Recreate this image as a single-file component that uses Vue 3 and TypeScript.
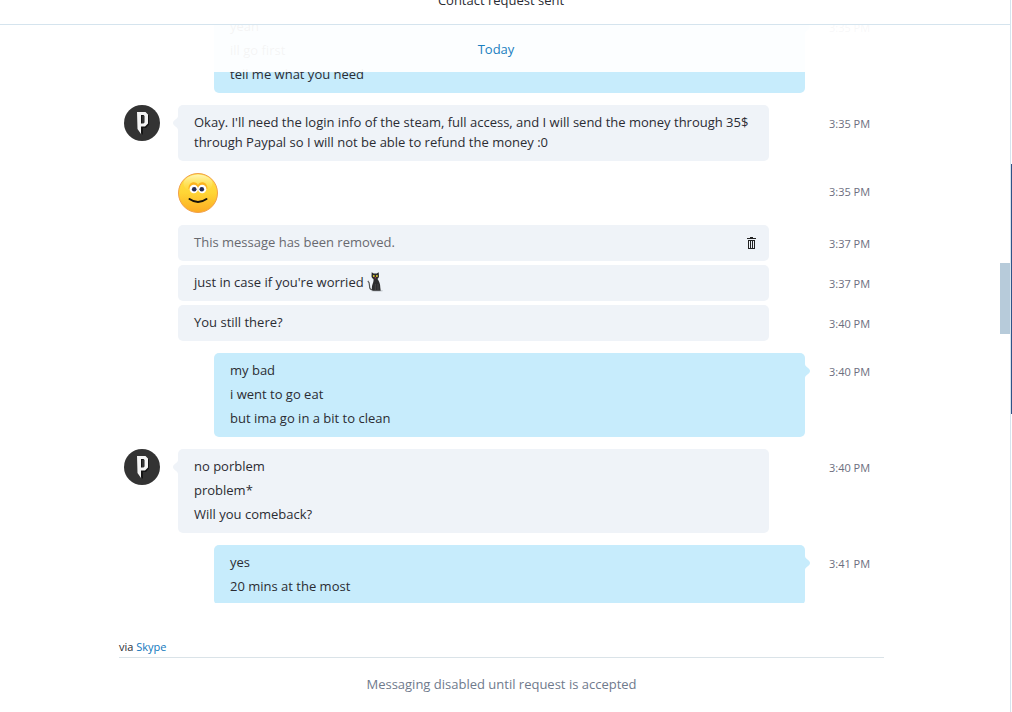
<script setup lang="ts">
type Kind = 'text' | 'removed' | 'smile' | 'cat'

interface Message {
  kind: Kind
  lines: string[]
  time: string
  mine?: boolean
  first?: boolean
}

const messages: Message[] = [
  { kind: 'text', lines: ['yeah', 'ill go first', 'tell me what you need'], time: '3:35 PM', mine: true, first: true },
  {
    kind: 'text',
    lines: [
      "Okay. I'll need the login info of the steam, full access, and I will send the money through 35$ through Paypal so I will not be able to refund the money :0",
    ],
    time: '3:35 PM',
    first: true,
  },
  { kind: 'smile', lines: [], time: '3:35 PM' },
  { kind: 'removed', lines: ['This message has been removed.'], time: '3:37 PM' },
  { kind: 'cat', lines: ["just in case if you're worried"], time: '3:37 PM' },
  { kind: 'text', lines: ['You still there?'], time: '3:40 PM' },
  { kind: 'text', lines: ['my bad', 'i went to go eat', 'but ima go in a bit to clean'], time: '3:40 PM', mine: true, first: true },
  { kind: 'text', lines: ['no porblem', 'problem*', 'Will you comeback?'], time: '3:40 PM', first: true },
  { kind: 'text', lines: ['yes', '20 mins at the most'], time: '3:41 PM', mine: true, first: true },
]
</script>

<template>
  <div class="app">
    <header class="top">Contact request sent</header>

    <main class="scroller">
      <h2 class="day">Today</h2>
      <ol class="list">
        <li
          v-for="(m, i) in messages"
          :key="i"
          class="row"
          :class="{ mine: m.mine, first: m.first, spaced: m.kind === 'smile' || m.kind === 'removed' }"
        >
          <div class="avatar">
            <svg v-if="m.first && !m.mine" viewBox="0 0 36 36" role="img" aria-label="Contact avatar">
              <circle cx="18" cy="18" r="18" fill="#333" />
              <path
                d="M13 7h8.500l2.500 2.500v9L21 22h-3v7l-4.500-5zM17 10v8.500h2.500V10z"
                fill="#151515"
                fill-rule="evenodd"
                transform="translate(1 1)"
              />
              <path d="M13 7h8.500l2.500 2.500v9L21 21.500h-4V29l-3.500-5zM17 10v8.500h2.500l1-1v-6.500l-1-1z" fill="#f4f4f4" fill-rule="evenodd" />
            </svg>
          </div>

          <div v-if="m.kind === 'smile'" class="emote">
            <svg viewBox="0 0 40 40" role="img" aria-label="Smile">
              <defs>
                <linearGradient id="face" x1="0" y1="0" x2="0" y2="1">
                  <stop offset="0" stop-color="#ffe04a" />
                  <stop offset=".5" stop-color="#ffd535" />
                  <stop offset="1" stop-color="#fcab22" />
                </linearGradient>
                <linearGradient id="shine" x1="0" y1="0" x2="0" y2="1">
                  <stop offset="0" stop-color="#fff6b5" />
                  <stop offset="1" stop-color="#ffe04a" stop-opacity="0" />
                </linearGradient>
              </defs>
              <circle cx="20" cy="20" r="19.500" fill="url(#face)" stroke="#f2a04a" />
              <ellipse cx="20" cy="10.500" rx="14.500" ry="9" fill="url(#shine)" />
              <path d="M10.500 16c0-8 8-8 9.500-4 1.500-4 9.500-4 9.500 4" fill="#fdb41f" />
              <circle cx="15.800" cy="16" r="4.200" fill="#fff" />
              <circle cx="24.200" cy="16" r="4.200" fill="#fff" />
              <circle cx="16.200" cy="16.200" r="2.300" fill="#262c55" />
              <circle cx="23.800" cy="16.200" r="2.300" fill="#262c55" />
              <path d="M11.500 26q8.500 6 17 0" fill="none" stroke="#17120a" stroke-width="2" stroke-linecap="round" />
            </svg>
          </div>

          <div v-else class="bubble" :class="{ removed: m.kind === 'removed' }">
            <svg v-if="m.first" class="tail" viewBox="0 0 5 14" aria-hidden="true">
              <path d="M5 0C5 3 0 4 0 7s5 4 5 7z" fill="currentColor" />
            </svg>
            <p v-for="line in m.lines" :key="line">
              {{ line }}
              <svg v-if="m.kind === 'cat'" class="cat" viewBox="0 0 20 20" role="img" aria-label="Cat">
                <ellipse cx="10" cy="18.800" rx="6" ry="1" fill="#cbd0d6" />
                <path d="M6 17.500C3 18 2.500 16 2.500 13.500S1.500 9.500.800 9" fill="none" stroke="#555" stroke-width="1.200" />
                <path
                  d="M4.700.300l2 1.300h3l2-1.300.3 4c0 1-.7 2-1.500 2.600 1.700 2 2.800 5 2.800 8.500l.4 3.300H5.500c-1-2-.7-5 .2-7 .7-1.600 1-3 .8-4.600C5.300 6.300 4.500 5.500 4.500 4.300z"
                  fill="#2c2c2e"
                />
                <circle cx="6.800" cy="4" r=".9" fill="#f0d72e" />
                <circle cx="9.900" cy="4" r=".9" fill="#f0d72e" />
                <path d="M7.700 5.800h1.300" stroke="#e46" stroke-width=".8" />
                <path d="M8.300 12v6.500M11 12v6.500" stroke="#555" stroke-width=".6" />
              </svg>
            </p>
            <svg v-if="m.kind === 'removed'" class="trash" viewBox="0 0 9 13" aria-hidden="true">
              <path
                d="M3 0h3v1h3v1H0V1h3zM1 3h7v9H1zm1 1v7h1V4zm2 0v7h1V4zm2 0v7h1V4z"
                fill="#222"
                fill-rule="evenodd"
              />
            </svg>
          </div>

          <time class="time">{{ m.time }}</time>
        </li>
      </ol>
    </main>

    <footer class="foot">
      <div class="via">via <a href="#skype">Skype</a></div>
      <p class="disabled">Messaging disabled until request is accepted</p>
    </footer>

    <div class="thumb"></div>
    <div class="edge"></div>
  </div>
</template>

<style>
body {
  margin: 0;
  background: #fff;
}
</style>

<style scoped>
.app {
  position: relative;
  box-sizing: border-box;
  display: flex;
  flex-direction: column;
  height: 100vh;
  padding-right: 1px;
  overflow: hidden;
  background: linear-gradient(#d5e4ee, #d5e4ee) calc(100% - 1px) 0 / 1px 100% no-repeat #fff;
  color: #2b2c33;
  font: 13px/20px "Open Sans", "Noto Sans", sans-serif;
}

.top {
  box-sizing: border-box;
  flex: none;
  height: 25px;
  padding-right: 9px;
  border-bottom: 1px solid #d5e4ee;
  line-height: 0;
  text-align: center;
}

.scroller {
  position: relative;
  flex: 1;
  min-height: 0;
  margin-right: 1px;
  padding-right: 7px;
  overflow: hidden;
}

.day {
  position: absolute;
  z-index: 1;
  top: 0;
  right: 0;
  left: 0;
  margin: 0;
  padding: 2px 18px 0 0;
  background: rgba(255, 255, 255, 0.95);
  color: #1b7fc0;
  font-size: 13px;
  font-weight: 400;
  line-height: 45px;
  text-align: center;
}

.list {
  box-sizing: border-box;
  max-width: 765px;
  margin: -16px auto 0;
  padding: 0 14px 0 5px;
  list-style: none;
}

.row {
  display: flex;
  align-items: flex-start;
  margin-top: 4px;
}

.row.first,
.row.spaced {
  margin-top: 12px;
}

.row:first-child {
  margin-top: 0;
}

.avatar {
  flex: none;
  width: 36px;
  margin-right: 18px;
}

.avatar svg,
.emote svg {
  display: block;
  width: 100%;
}

.bubble {
  position: relative;
  flex: 1;
  margin-right: 60px;
  padding: 5px 16px 7px;
  border-radius: 5px;
  background: #eff3f8;
}

.mine .bubble {
  margin-right: 24px;
  margin-left: 36px;
  background: #c7ecfc;
}

.bubble p {
  margin: 0;
  padding: 2px 0;
}

.bubble.removed {
  color: #68696f;
}

.tail {
  position: absolute;
  top: 11px;
  left: -5px;
  width: 5px;
  height: 14px;
  color: #eff3f8;
}

.mine .tail {
  right: -5px;
  left: auto;
  color: #c7ecfc;
  transform: scaleX(-1);
}

.emote {
  width: 40px;
  margin-right: auto;
}

.cat {
  width: 20px;
  height: 20px;
  vertical-align: top;
}

.trash {
  position: absolute;
  top: 12px;
  right: 13px;
  width: 9px;
  height: 13px;
}

.time {
  flex: none;
  width: 41px;
  padding-top: 9px;
  color: #6c6e7e;
  font-size: 11px;
  white-space: nowrap;
}

.foot {
  flex: none;
  box-sizing: border-box;
  width: 100%;
  height: 109px;
  padding: 34px 8px 0 0;
}

.via {
  max-width: 765px;
  margin: 0 auto;
  border-bottom: 1px solid #dae3e8;
  font-size: 11px;
}

.via a {
  color: #0f78bd;
  text-decoration: none;
}

.disabled {
  margin: 16px 0 0;
  color: #6f7a8c;
  text-align: center;
}

.thumb {
  position: absolute;
  top: 263px;
  right: 2px;
  width: 10px;
  height: 71px;
  background: #b7cbda;
}

.edge {
  position: absolute;
  top: 164px;
  right: 0;
  width: 1px;
  height: 250px;
  background: #2f5387;
}
</style>
